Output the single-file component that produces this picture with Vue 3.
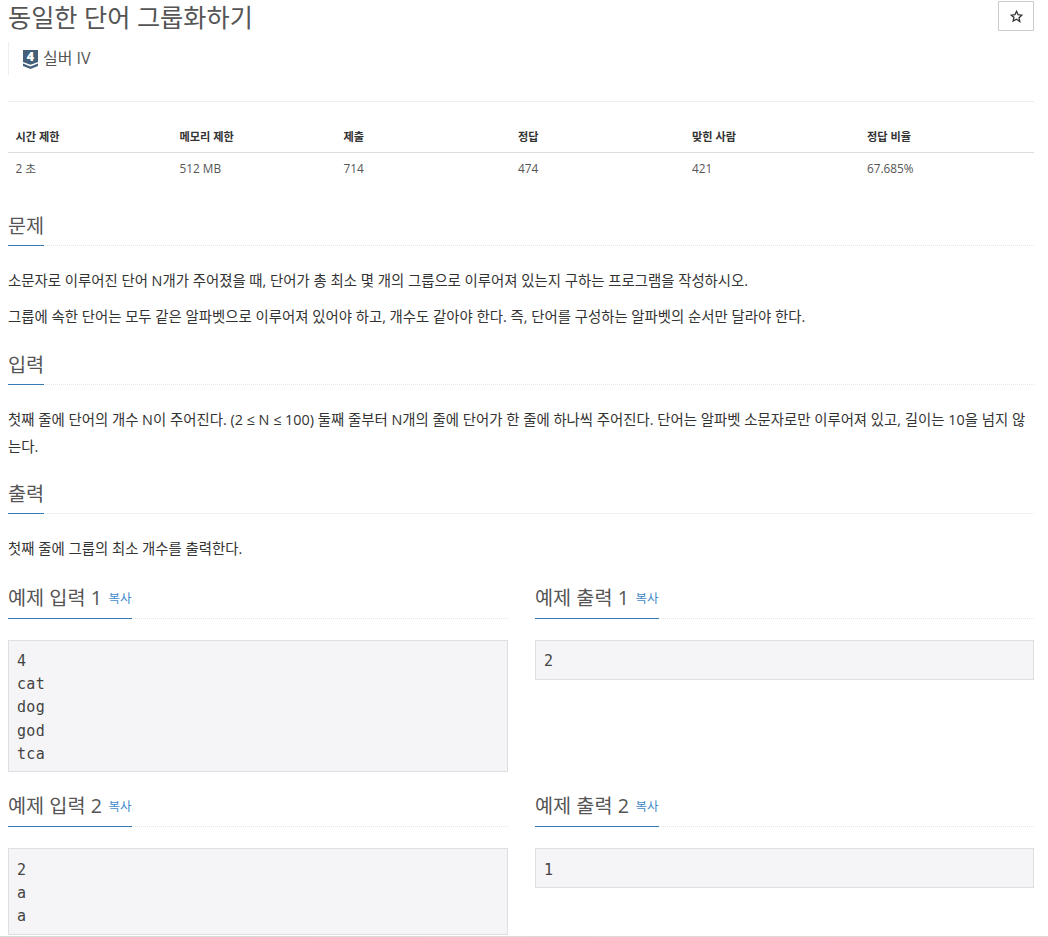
<script setup>
const stats = [
  ['시간 제한', '2 초', 164],
  ['메모리 제한', '512 MB', 164],
  ['제출', '714', 174.5],
  ['정답', '474', 174],
  ['맞힌 사람', '421', 175],
  ['정답 비율', '67.685%', 0],
]
const samples = [
  [{ t: '예제 입력 1', c: '4\ncat\ndog\ngod\ntca' }, { t: '예제 출력 1', c: '2' }],
  [{ t: '예제 입력 2', c: '2\na\na' }, { t: '예제 출력 2', c: '1' }],
]
</script>

<template>
  <div class="page">
    <div class="top">
      <h1 class="title">동일한 단어 그룹화하기</h1>
      <button class="star">
        <svg width="13" height="13" viewBox="0 0 24 24"><path d="M12 2.5l2.9 6.3 6.9.8-5.1 4.7 1.4 6.8L12 16.9l-6.1 3.5 1.4-6.8L2.2 9.6l6.9-.8z" fill="none" stroke="#333" stroke-width="2.4"/></svg>
      </button>
    </div>
    <div class="tier">
      <span class="badge">
        <svg width="15" height="19" viewBox="0 0 15 19">
          <path d="M0 0h15v12l-7.5 2.8L0 12z" fill="#435f7a"/>
          <path d="M0 13.6l7.5 3 7.5-3V16l-7.5 3L0 16z" fill="#435f7a"/>
        </svg>
        <span class="badge-num">4</span>
      </span>
      <span>실버 IV</span>
    </div>
    <hr class="rule" />

    <div class="stats">
      <div v-for="s in stats" :key="s[0]" class="stat" :style="s[2] ? { width: s[2] + 'px' } : { flex: 1 }">
        <div class="stat-h">{{ s[0] }}</div>
        <div class="stat-v">{{ s[1] }}</div>
      </div>
    </div>

    <section class="sec first">
      <div class="head"><h2>문제</h2></div>
      <p>소문자로 이루어진 단어 N개가 주어졌을 때, 단어가 총 최소 몇 개의 그룹으로 이루어져 있는지 구하는 프로그램을 작성하시오.</p>
      <p>그룹에 속한 단어는 모두 같은 알파벳으로 이루어져 있어야 하고, 개수도 같아야 한다. 즉, 단어를 구성하는 알파벳의 순서만 달라야 한다.</p>
    </section>
    <section class="sec">
      <div class="head"><h2>입력</h2></div>
      <p>첫째 줄에 단어의 개수 N이 주어진다. (2 ≤ N ≤ 100) 둘째 줄부터 N개의 줄에 단어가 한 줄에 하나씩 주어진다. 단어는 알파벳 소문자로만 이루어져 있고, 길이는 10을 넘지 않는다.</p>
    </section>
    <section class="sec">
      <div class="head"><h2>출력</h2></div>
      <p>첫째 줄에 그룹의 최소 개수를 출력한다.</p>
    </section>

    <div v-for="(row, i) in samples" :key="i" class="row">
      <div v-for="s in row" :key="s.t" class="col">
        <div class="head"><h2>{{ s.t }} <a class="copy">복사</a></h2></div>
        <pre>{{ s.c }}</pre>
      </div>
    </div>
    <div class="foot"></div>
  </div>
</template>

<style>
html, body { margin: 0; background: #fff; }
</style>

<style scoped>
.page {
  position: relative;
  box-sizing: border-box;
  width: 1048px;
  height: 937px;
  overflow: hidden;
  padding: 0 14px 0 8px;
  font-family: "Open Sans", "Noto Sans CJK KR", sans-serif;
  color: #333;
  font-size: 13px;
}
.foot {
  position: absolute;
  left: 0;
  right: 0;
  bottom: 0;
  height: 1px;
  background: linear-gradient(90deg, #d8dcd8 0, #dcdad8 55%, #e2d8d8 100%);
}
.top { display: flex; justify-content: space-between; align-items: flex-start; }
.title {
  margin: 0;
  padding-top: 2px;
  font-size: 25.2px;
  line-height: 30px;
  font-weight: 400;
  color: #555;
}
.star {
  box-sizing: border-box;
  width: 36px;
  height: 30px;
  margin-top: 1px;
  padding: 0;
  background: #fff;
  border: 1px solid #ccc;
  display: flex;
  align-items: center;
  justify-content: center;
}
.tier {
  margin-top: 10px;
  height: 33px;
  border-left: 1px solid #eee;
  padding-left: 14px;
  padding-bottom: 3px;
  box-sizing: border-box;
  display: flex;
  align-items: center;
  gap: 5px;
  font-size: 16px;
  color: #555;
}
.badge { position: relative; display: block; width: 15px; height: 19px; margin-top: 4px; }
.badge svg { display: block; }
.badge-num {
  position: absolute;
  left: 0;
  top: 0;
  width: 15px;
  height: 14px;
  text-align: center;
  font: 800 12.5px/14px "Open Sans", sans-serif;
  color: #fff;
}
.rule { border: 0; border-top: 1px solid #eee; margin: 26px 0 0; }
.stats { display: flex; margin-top: 17px; }
.stat-h {
  font-size: 11.2px;
  font-weight: 700;
  height: 32px;
  padding-top: 1px;
  line-height: 33px;
  padding-left: 7.5px;
  border-bottom: 1px solid #ddd;
  color: #333;
}
.stat-v { font-size: 11.8px; line-height: 18px; padding: 6px 0 0 7.5px; color: #555; }
.sec { margin-top: 20.5px; }
.sec.first { margin-top: 35px; }
.head { border-bottom: 1px dotted #e5e5e5; margin-bottom: 21px; }
.head h2 {
  display: inline-block;
  vertical-align: top;
  margin: 0 0 -1px;
  padding-bottom: 5px;
  font-size: 19.7px;
  line-height: 28px;
  font-weight: 400;
  color: #555;
  border-bottom: 1px solid #337ab7;
}
p { margin: 0 0 9px; line-height: 27px; font-size: 14.4px; color: #333; word-break: break-all; }
.row { display: flex; gap: 27px; margin-top: 21.5px; }
.row + .row { margin-top: 20px; }
.col { width: 500px; }
.col + .col { width: 499px; }
.copy { font-size: 12.5px; color: #428bca; margin-left: 1.5px; vertical-align: 2px; }
pre {
  margin: 0;
  box-sizing: border-box;
  background: #f5f5f7;
  border: 1px solid #dedee3;
  padding: 9.5px 8px 5.3px;
  font-family: "DejaVu Sans Mono", monospace;
  font-size: 15px;
  letter-spacing: 0.3px;
  line-height: 23.2px;
  color: #444;
}
</style>
